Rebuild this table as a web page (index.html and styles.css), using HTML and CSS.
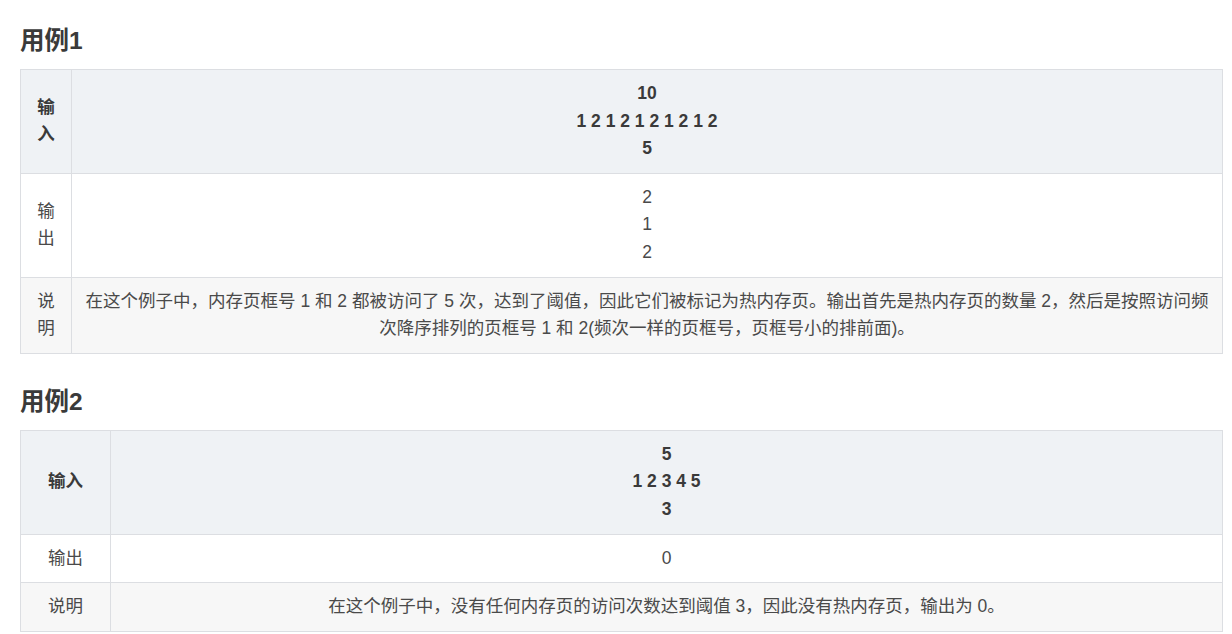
FILE: index.html
```html
<!DOCTYPE html>
<html lang="zh-CN">
<head>
  <meta charset="UTF-8" />
  <meta name="viewport" content="width=device-width, initial-scale=1.0" />
  <title>用例</title>
  <link rel="stylesheet" href="styles.css">
</head>
<body>
  <div class="page">
    <h3>用例1</h3>
    <table class="case-table">
      <colgroup>
        <col class="label-col narrow" />
        <col />
      </colgroup>
      <thead>
        <tr>
          <th>输入</th>
          <th>10<br>1 2 1 2 1 2 1 2 1 2<br>5</th>
        </tr>
      </thead>
      <tbody>
        <tr>
          <td>输出</td>
          <td>2<br>1<br>2</td>
        </tr>
        <tr class="striped">
          <td>说明</td>
          <td>在这个例子中，内存页框号 1 和 2 都被访问了 5 次，达到了阈值，因此它们被标记为热内存页。输出首先是热内存页的数量 2，然后是按照访问频次降序排列的页框号 1 和 2(频次一样的页框号，页框号小的排前面)。</td>
        </tr>
      </tbody>
    </table>

    <h3>用例2</h3>
    <table class="case-table">
      <colgroup>
        <col class="label-col wide" />
        <col />
      </colgroup>
      <thead>
        <tr>
          <th>输入</th>
          <th>5<br>1 2 3 4 5<br>3</th>
        </tr>
      </thead>
      <tbody>
        <tr>
          <td>输出</td>
          <td>0</td>
        </tr>
        <tr class="striped">
          <td>说明</td>
          <td>在这个例子中，没有任何内存页的访问次数达到阈值 3，因此没有热内存页，输出为 0。</td>
        </tr>
      </tbody>
    </table>
  </div>
</body>
</html>
```

FILE: styles.css
```css
body {
  margin: 0;
  background: #fff;
  font-family: "Liberation Sans", "Noto Sans CJK SC", sans-serif;
  color: #4a4a4a;
}

.page {
  padding: 23px 9px 0 20px;
}

h3 {
  margin: 30px 0 10px;
  font-size: 24.5px;
  line-height: 36px;
  font-weight: bold;
  color: #3a3a3a;
}

.page h3:first-child {
  margin-top: 0;
}

.case-table {
  width: 100%;
  border-collapse: collapse;
  table-layout: fixed;
  font-size: 17.5px;
  line-height: 27.6px;
}

.label-col.narrow {
  width: 51px;
}

.label-col.wide {
  width: 90px;
}

.case-table th,
.case-table td {
  border: 1px solid #dcdee2;
  padding: 10px 10px;
  text-align: center;
  vertical-align: middle;
}

.case-table th {
  background: #eff2f5;
  color: #3a3a3a;
  font-weight: bold;
}

.case-table td {
  background: #fff;
}

.case-table .striped td {
  background: #f7f7f7;
}
```
